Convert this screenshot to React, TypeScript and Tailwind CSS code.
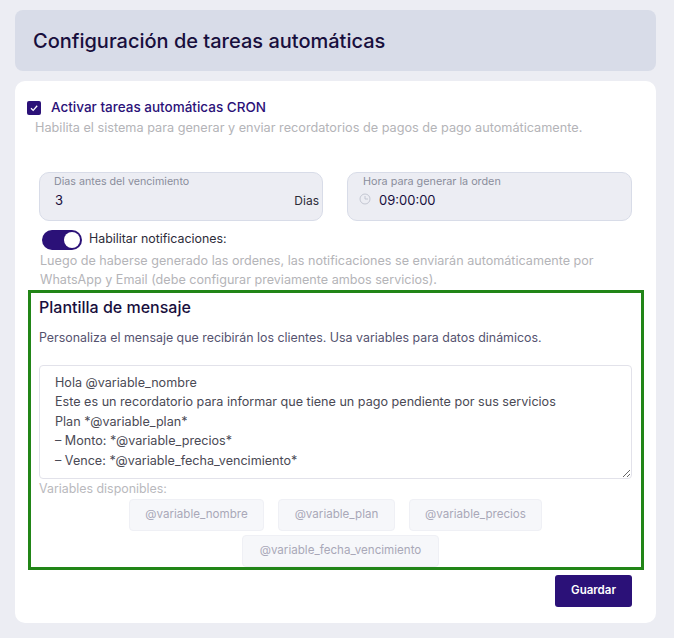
import React from "react";

function Chip({ label, className }: { label: string; className: string }) {
  return (
    <span className={"h-[32px] flex items-center justify-center rounded-[4px] border border-[#eff0f5] bg-[#f6f7fa] text-[11.6px] text-[#a9a8b8] " + className}>
      {label}
    </span>
  );
}

export default function App() {
  return (
    <div className="w-[674px] h-[638px] bg-[#ecedf3] pt-[10px] font-['Inter',sans-serif] overflow-hidden">
      <div className="ml-[15px] w-[641px] h-[61px] rounded-[8px] bg-[#d8dce8] flex items-center px-[18px]">
        <h1 className="text-[20px] font-medium text-[#180f3d] leading-none">Configuración de tareas automáticas</h1>
      </div>
      <div className="ml-[15px] w-[641px] mt-[10px] h-[542px] rounded-[10px] bg-white pt-[18px] flex flex-col">
        <div className="flex items-center gap-[10px] pl-[12px] h-[17px]">
          <span className="w-[14px] h-[14px] rounded-[2px] bg-[#2b1178] flex items-center justify-center">
            <svg width="10" height="10" viewBox="0 0 10 10" fill="none" stroke="white" strokeWidth="1.3"><path d="M2 5.2 4.2 7.4 8.2 2.8" /></svg>
          </span>
          <span className="text-[13.5px] font-medium text-[#2b1178]">Activar tareas automáticas CRON</span>
        </div>
        <p className="pl-[20px] mt-[3px] text-[12.7px] leading-[18px] text-[#b4b4b8]">Habilita el sistema para generar y enviar recordatorios de pagos de pago automáticamente.</p>

        <div className="mt-[35px] pl-[24px] grid grid-cols-[284px_285px] gap-[24px]">
          <div className="h-[49px] rounded-[10px] border border-[#d8dce8] bg-[#ecedf3] pl-[14px] pr-[3px] pt-[2px]">
            <div className="text-[10.7px] leading-[14px] text-[#8a8d9c]">Dias antes del vencimiento</div>
            <div className="flex justify-between items-center mt-[2px] text-[13px] text-[#2c2c38]">
              <span className="pl-[1px] text-[#180f3d]">3</span>
              <span className="text-[12px]">Dias</span>
            </div>
          </div>
          <div className="h-[49px] rounded-[10px] border border-[#d8dce8] bg-[#ecedf3] pl-[11px] pt-[2px]">
            <div className="pl-[4px] text-[10.8px] leading-[14px] text-[#8a8d9c]">Hora para generar la orden</div>
            <div className="flex items-center gap-[8px] mt-[2px] text-[13px] text-[#180f3d]">
              <svg className="mb-[3px]" width="12" height="12" viewBox="0 0 24 24" fill="none" stroke="#b9bcc9" strokeWidth="1.6"><circle cx="12" cy="12" r="10" /><path d="M12 6v6h6" /></svg>
              <span>09:00:00</span>
            </div>
          </div>
        </div>

        <div className="mt-[8px] pl-[27px] flex items-center gap-[7px] h-[21px]">
          <span className="w-[40px] h-[20px] rounded-full bg-[#2b1178] flex items-center justify-end pr-[2px]">
            <span className="w-[16px] h-[16px] rounded-full bg-white" />
          </span>
          <span className="text-[12.4px] text-[#2c2c38]">Habilitar notificaciones:</span>
        </div>
        <p className="pl-[25px] pr-[50px] mt-[1px] text-[12.6px] leading-[19px] text-[#b4b4b8]">Luego de haberse generado las ordenes, las notificaciones se enviarán automáticamente por WhatsApp y Email (debe configurar previamente ambos servicios).</p>

        <div className="ml-[13px] mt-[1px] w-[616px] h-[280px] border-[3px] border-[#218517] overflow-hidden pl-[8px] pr-[9px] pt-[2px]">
          <h2 className="text-[16px] font-medium leading-[24px] text-[#180f3d]">Plantilla de mensaje</h2>
          <p className="mt-[10px] text-[12.4px] leading-[18px] text-[#55536f]">Personaliza el mensaje que recibirán los clientes. Usa variables para datos dinámicos.</p>
          <textarea
            readOnly
            className="block mt-[18px] w-full h-[114px] rounded-[4px] border border-[#e2e2ea] bg-white px-[15px] pt-[7px] text-[12.6px] leading-[19.4px] text-[#4a4a55] outline-none"
            value={"Hola @variable_nombre\nEste es un recordatorio para informar que tiene un pago pendiente por sus servicios\nPlan *@variable_plan*\n– Monto: *@variable_precios*\n– Vence: *@variable_fecha_vencimiento*"}
          />
          <div className="mt-[1px] text-[12.4px] leading-[18px] text-[#b9b9bd]">Variables disponibles:</div>
          <div className="mt-[1px] flex flex-wrap justify-center gap-x-[14px] gap-y-[4px]">
            <Chip label="@variable_nombre" className="w-[135px]" />
            <Chip label="@variable_plan" className="w-[117px]" />
            <Chip label="@variable_precios" className="w-[133px]" />
            <Chip label="@variable_fecha_vencimiento" className="w-[197px] ml-[10px]" />
          </div>
        </div>

        <div className="flex justify-end pr-[24px] mt-[5px]">
          <button className="w-[77px] h-[32px] rounded-[3px] bg-[#2b1178] text-white text-[11.5px] font-semibold">Guardar</button>
        </div>
      </div>
    </div>
  );
}
